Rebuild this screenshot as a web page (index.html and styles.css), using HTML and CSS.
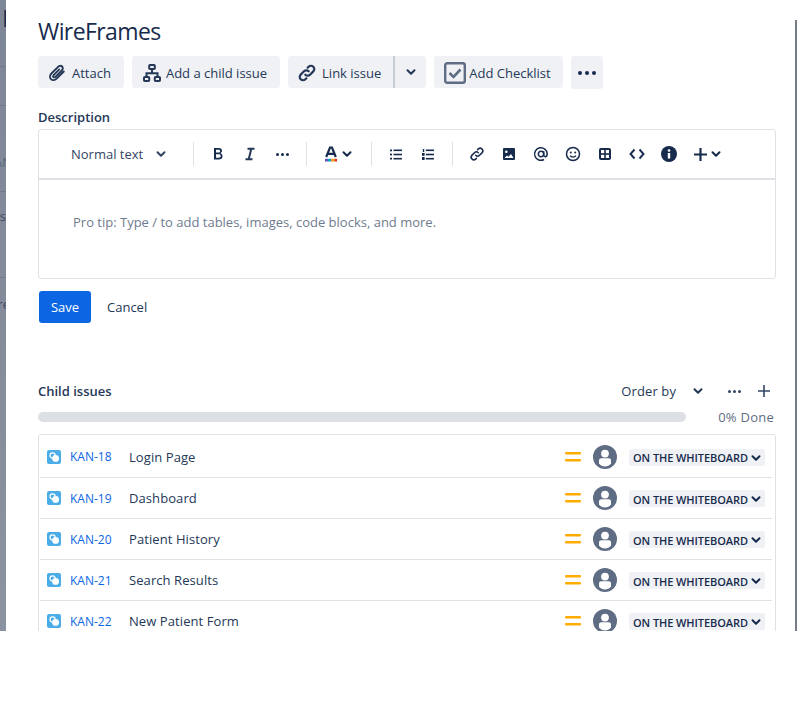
FILE: index.html
```html
<!DOCTYPE html>
<html lang="en">
<head>
    <meta charset="UTF-8">
    <meta name="viewport" content="width=device-width, initial-scale=1.0">
    <title>WireFrames</title>
    <link rel="stylesheet" href="styles.css">
</head>
<body>
    <svg class="defs" width="0" height="0" aria-hidden="true">
        <symbol id="i-chevron" viewBox="0 0 12 12"><path d="M2.500 4.200 6 7.700l3.500-3.500" fill="none" stroke="currentColor" stroke-width="2" stroke-linecap="round" stroke-linejoin="round"/></symbol>
        <symbol id="i-story" viewBox="0 0 14 14"><rect width="14" height="14" rx="2" fill="#4bade8"/><circle cx="5.600" cy="5.400" r="2.600" fill="none" stroke="#fff" stroke-width="1.200"/><circle cx="8.600" cy="8.400" r="3.400" fill="#fff"/></symbol>
        <symbol id="i-medium" viewBox="0 0 16 12"><rect y="1" width="16" height="2.400" rx="1" fill="#ffab00"/><rect y="8" width="16" height="2.400" rx="1" fill="#ffab00"/></symbol>
        <symbol id="i-avatar" viewBox="0 0 24 24"><circle cx="12" cy="12" r="12" fill="#5e6c84"/><circle cx="12" cy="8.600" r="3.900" fill="#fff"/><path d="M6 15.500c0-1.400 1-2.300 2.400-2.300h7.200c1.400 0 2.400.9 2.400 2.300V18.500a7.500 7.500 0 0 1-12 0z" fill="#fff"/></symbol>
    </svg>

    <div class="screen">
        <div class="backdrop">
            <div class="back-row r1"><span class="big">N</span></div>
            <div class="back-row r2"></div>
            <div class="back-row r3"><span class="cut-an">AN</span></div>
            <div class="back-row r4"><span>s</span></div>
            <div class="back-row r5"><span class="cut-re">re</span></div>
        </div>

        <main class="modal">
            <h1 class="title">WireFrames</h1>

            <div class="actions">
                <button class="btn" type="button">
                    <svg class="ic20" viewBox="0 0 20 20"><path d="M16.800 8.500 9.600 15.700c-1.700 1.700-4.200 1.800-5.600.4s-1.300-3.900.4-5.600l6.700-6.700c1.200-1.200 3-1.300 4-.3s.9 2.800-.3 4l-6.400 6.400c-.6.6-1.500.7-2 .2s-.4-1.400.2-2l5.700-5.700" fill="none" stroke="#253858" stroke-width="1.900" stroke-linecap="round"/></svg>
                    Attach
                </button>
                <button class="btn child-btn" type="button">
                    <svg class="ic20" viewBox="0 0 20 20"><g fill="none" stroke="#253858" stroke-width="2"><rect x="7.200" y="2" width="5.600" height="4" rx=".8"/><rect x="2" y="14" width="5.200" height="4" rx=".8"/><rect x="12.800" y="14" width="5.200" height="4" rx=".8"/><path d="M10 6v4.300M4.500 14v-3.700h11V14"/></g></svg>
                    Add a child issue
                </button>
                <div class="split">
                    <button class="btn link-btn" type="button">
                        <svg class="ic20" viewBox="0 0 20 20"><g fill="none" stroke="#253858" stroke-width="2.200" stroke-linecap="round"><path d="M8.300 11.700a3.300 3.300 0 0 0 4.700 0l3.300-3.300a3.300 3.300 0 0 0-4.700-4.700l-1 1"/><path d="M11.700 8.300a3.300 3.300 0 0 0-4.700 0l-3.300 3.300a3.300 3.300 0 0 0 4.700 4.700l1-1"/></g></svg>
                        Link issue
                    </button>
                    <button class="btn split-arrow" type="button"><svg class="ic12" viewBox="0 0 12 12"><use href="#i-chevron"/></svg></button>
                </div>
                <button class="btn check-btn" type="button">
                    <svg class="ic22" viewBox="0 0 22 22"><rect x="1.200" y="1.200" width="19.600" height="19.600" rx="2" fill="none" stroke="#5e6c84" stroke-width="2.400"/><path d="m5.500 11 4 4 7-7.500" fill="none" stroke="#5e6c84" stroke-width="2.600"/></svg>
                    Add Checklist
                </button>
                <button class="btn more-btn" type="button" aria-label="More"><span class="dots big-dots"><i></i><i></i><i></i></span></button>
            </div>

            <h2 class="label desc-label">Description</h2>
            <section class="editor">
                <div class="tools">
                    <span class="style-pick">Normal text <svg class="ic12" viewBox="0 0 12 12"><use href="#i-chevron"/></svg></span>
                    <span class="sep sep1"></span>
                    <span class="tool t-b">
                        <svg viewBox="0 0 16 16"><path d="M4 2h4.800c2 0 3.200 1 3.200 2.800 0 1.200-.7 2.100-1.800 2.500 1.400.3 2.300 1.400 2.300 2.900 0 2.100-1.500 3.300-3.700 3.300H4zm2 1.800v2.800h2.500c1.100 0 1.600-.5 1.600-1.400s-.6-1.400-1.600-1.400zm0 4.500v3.400h2.800c1.200 0 1.900-.6 1.900-1.700s-.7-1.700-1.900-1.700z" fill="#172b4d"/></svg>
                    </span>
                    <span class="tool t-i">
                        <svg viewBox="0 0 16 16"><path d="M5.500 2.800h7M3.500 13.200h7M9.300 2.800 6.700 13.200" fill="none" stroke="#253858" stroke-width="2"/></svg>
                    </span>
                    <span class="tool t-more"><span class="dots"><i></i><i></i><i></i></span></span>
                    <span class="sep sep2"></span>
                    <span class="tool t-color">
                        <svg viewBox="0 0 14 16"><path d="M2.200 11 6 1.500h2L11.800 11M3.800 7.800h6.400" fill="none" stroke="#172b4d" stroke-width="2.200"/><rect x="1" y="12.800" width="3" height="2.700" fill="#6554c0"/><rect x="4" y="12.800" width="3" height="2.700" fill="#00a3bf"/><rect x="7" y="12.800" width="3.500" height="2.700" fill="#ff991f"/><rect x="10.500" y="12.800" width="2.500" height="2.700" fill="#de350b"/></svg>
                        <svg class="ic12" viewBox="0 0 12 12"><use href="#i-chevron"/></svg>
                    </span>
                    <span class="sep sep3"></span>
                    <span class="tool t-ul">
                        <svg viewBox="0 0 12 11"><g fill="#172b4d"><rect x="0" y="0.500" width="2" height="1.800"/><rect x="0" y="4.600" width="2" height="1.800"/><rect x="0" y="8.700" width="2" height="1.800"/><rect x="3.500" y="0.500" width="8.500" height="1.600"/><rect x="3.500" y="4.700" width="8.500" height="1.600"/><rect x="3.500" y="8.900" width="8.500" height="1.600"/></g></svg>
                    </span>
                    <span class="tool t-ol">
                        <svg viewBox="0 0 12 11"><g fill="#172b4d"><rect x="3.800" y="0.500" width="8.200" height="1.600"/><rect x="3.800" y="4.700" width="8.200" height="1.600"/><rect x="3.800" y="8.900" width="8.200" height="1.600"/><rect x="0.800" y="0" width="1.400" height="3"/><rect x="0" y="4" width="2.600" height="2.800"/><rect x="0" y="8" width="2.600" height="3"/></g></svg>
                    </span>
                    <span class="sep sep4"></span>
                    <span class="tool t-link">
                        <svg viewBox="0 0 16 16"><g fill="none" stroke="#172b4d" stroke-width="1.600" stroke-linecap="round"><path d="M6.700 9.300a2.700 2.700 0 0 0 3.800 0l2.700-2.700a2.700 2.700 0 0 0-3.800-3.800l-.8.800"/><path d="M9.300 6.700a2.700 2.700 0 0 0-3.800 0l-2.700 2.700a2.700 2.700 0 0 0 3.800 3.800l.8-.8"/></g></svg>
                    </span>
                    <span class="tool t-img">
                        <svg viewBox="0 0 12 12"><rect width="12" height="12" rx="1" fill="#172b4d"/><circle cx="3.300" cy="3.700" r="1.300" fill="#fff"/><path d="m1.500 10 2.500-2.500 1.500 1.300L8 6l2.500 4z" fill="#fff"/></svg>
                    </span>
                    <span class="tool t-at">
                        <svg viewBox="0 0 16 16"><g fill="none" stroke="#172b4d" stroke-width="1.500"><circle cx="8" cy="8" r="2.700"/><path d="M10.700 5.200v3.900c0 1 .7 1.600 1.500 1.600s2-.9 2-2.900A6.300 6.300 0 1 0 11 13.500"/></g></svg>
                    </span>
                    <span class="tool t-emoji">
                        <svg viewBox="0 0 16 16"><circle cx="8" cy="8" r="6.500" fill="none" stroke="#172b4d" stroke-width="1.500"/><circle cx="5.800" cy="6.500" r="1" fill="#172b4d"/><circle cx="10.200" cy="6.500" r="1" fill="#172b4d"/><path d="M5 9.800c1.500 1.700 4.500 1.700 6 0" fill="none" stroke="#172b4d" stroke-width="1.300"/></svg>
                    </span>
                    <span class="tool t-table">
                        <svg viewBox="0 0 12 12"><rect width="12" height="12" rx="2" fill="#172b4d"/><g fill="#fff"><rect x="2" y="2" width="3.200" height="3.200"/><rect x="6.800" y="2" width="3.200" height="3.200"/><rect x="2" y="6.800" width="3.200" height="3.200"/><rect x="6.800" y="6.800" width="3.200" height="3.200"/></g></svg>
                    </span>
                    <span class="tool t-code">
                        <svg viewBox="0 0 16 12"><path d="M5.500 1.500 1.500 6l4 4.500M10.500 1.500l4 4.500-4 4.500" fill="none" stroke="#172b4d" stroke-width="1.900"/></svg>
                    </span>
                    <span class="tool t-info">
                        <svg viewBox="0 0 16 16"><circle cx="8" cy="8" r="8" fill="#172b4d"/><circle cx="8" cy="4.500" r="1.300" fill="#fff"/><rect x="6.800" y="7" width="2.400" height="5.500" fill="#fff"/></svg>
                    </span>
                    <span class="tool t-plus">
                        <svg viewBox="0 0 12 12"><path d="M6 0v12M0 6h12" stroke="#172b4d" stroke-width="2"/></svg>
                        <svg class="ic12" viewBox="0 0 12 12"><use href="#i-chevron"/></svg>
                    </span>
                </div>
                <div class="editor-body">Pro tip: Type / to add tables, images, code blocks, and more.</div>
            </section>

            <div class="form-btns">
                <button class="save" type="button">Save</button>
                <button class="cancel" type="button">Cancel</button>
            </div>

            <div class="child-head">
                <h2 class="label">Child issues</h2>
                <div class="child-tools">
                    <span class="order">Order by</span>
                    <svg class="ic12 order-arrow" viewBox="0 0 12 12"><use href="#i-chevron"/></svg>
                    <span class="dots child-dots"><i></i><i></i><i></i></span>
                    <svg class="child-plus" viewBox="0 0 12 12"><path d="M6 0v12M0 6h12" stroke="#344563" stroke-width="1.600"/></svg>
                </div>
            </div>

            <div class="progress-row">
                <div class="progress"></div>
                <span class="done">0% Done</span>
            </div>

            <div class="issues">
                <div class="issue">
                    <svg class="story"><use href="#i-story"/></svg>
                    <a class="key">KAN-18</a>
                    <span class="name">Login Page</span>
                    <svg class="prio"><use href="#i-medium"/></svg>
                    <svg class="avatar"><use href="#i-avatar"/></svg>
                    <span class="status">ON THE WHITEBOARD <svg class="ic12" viewBox="0 0 12 12"><use href="#i-chevron"/></svg></span>
                </div>
                <div class="issue">
                    <svg class="story"><use href="#i-story"/></svg>
                    <a class="key">KAN-19</a>
                    <span class="name">Dashboard</span>
                    <svg class="prio"><use href="#i-medium"/></svg>
                    <svg class="avatar"><use href="#i-avatar"/></svg>
                    <span class="status">ON THE WHITEBOARD <svg class="ic12" viewBox="0 0 12 12"><use href="#i-chevron"/></svg></span>
                </div>
                <div class="issue">
                    <svg class="story"><use href="#i-story"/></svg>
                    <a class="key">KAN-20</a>
                    <span class="name">Patient History</span>
                    <svg class="prio"><use href="#i-medium"/></svg>
                    <svg class="avatar"><use href="#i-avatar"/></svg>
                    <span class="status">ON THE WHITEBOARD <svg class="ic12" viewBox="0 0 12 12"><use href="#i-chevron"/></svg></span>
                </div>
                <div class="issue">
                    <svg class="story"><use href="#i-story"/></svg>
                    <a class="key">KAN-21</a>
                    <span class="name">Search Results</span>
                    <svg class="prio"><use href="#i-medium"/></svg>
                    <svg class="avatar"><use href="#i-avatar"/></svg>
                    <span class="status">ON THE WHITEBOARD <svg class="ic12" viewBox="0 0 12 12"><use href="#i-chevron"/></svg></span>
                </div>
                <div class="issue">
                    <svg class="story"><use href="#i-story"/></svg>
                    <a class="key">KAN-22</a>
                    <span class="name">New Patient Form</span>
                    <svg class="prio"><use href="#i-medium"/></svg>
                    <svg class="avatar"><use href="#i-avatar"/></svg>
                    <span class="status">ON THE WHITEBOARD <svg class="ic12" viewBox="0 0 12 12"><use href="#i-chevron"/></svg></span>
                </div>
            </div>
        </main>

        <div class="edge"><div class="edge-bar"></div></div>
    </div>
</body>
</html>
```

FILE: styles.css
```css
* {
    box-sizing: border-box;
}
html, body {
    margin: 0;
    height: 701px;
    overflow: hidden;
    background: #ffffff;
}
body {
    font-family: "Open Sans", "Noto Sans", Arial, sans-serif;
    font-size: 13px;
    color: #172b4d;
}
.defs {
    display: block;
    height: 0;
}
button {
    font: inherit;
    color: inherit;
    border: none;
    cursor: pointer;
}
svg {
    display: block;
    flex: none;
}
.ic12 {
    width: 12px;
    height: 12px;
}
.ic20 {
    width: 20px;
    height: 20px;
}
.ic22 {
    width: 22px;
    height: 22px;
}

/* main frame, cut off at 631 like the capture */
.screen {
    display: flex;
    height: 631px;
    overflow: hidden;
}
.backdrop {
    width: 6px;
    background: linear-gradient(#7d8697, #8b92a1);
    color: #3f4a60;
    font-size: 13px;
    overflow: hidden;
}
.back-row {
    display: flex;
    justify-content: flex-end;
    white-space: nowrap;
    border-bottom: 1px solid #727a8a;
}
.r1 { height: 67px; align-items: flex-start; }
.r2 { height: 39px; }
.r3 { height: 86px; align-items: center; padding-top: 27px; }
.r4 { height: 86px; align-items: flex-start; padding-top: 15px; }
.r5 { height: 60px; align-items: flex-start; padding-top: 17px; border-bottom: none; }
.big {
    font-size: 24px;
    line-height: 36px;
    color: #172b4d;
    margin-right: -14px;
}
.cut-an {
    margin-right: -6px;
    color: #5a6478;
}
.cut-re {
    margin-right: -4px;
}
.modal {
    flex: 1;
    min-width: 0;
    padding: 0 0 0 32px;
    background: #ffffff;
}
.edge {
    width: 6px;
    padding-top: 20px;
}
.edge-bar {
    width: 2px;
    height: 100%;
    background: #777c85;
}
.title {
    margin: 0;
    padding-top: 15px;
    font-size: 23px;
    font-weight: 400;
    line-height: 33px;
    letter-spacing: -0.6px;
    color: #172b4d;
}

/* action buttons */
.actions {
    display: flex;
    align-items: flex-start;
    gap: 8px;
    margin-top: 8px;
    height: 33px;
}
.btn {
    display: flex;
    align-items: center;
    gap: 5px;
    height: 32px;
    padding: 1px 13px 0 9px;
    background: #f0f1f4;
    border-radius: 3px;
    color: #253858;
    white-space: nowrap;
}
.child-btn {
    gap: 4px;
    padding-left: 10px;
    padding-right: 13px;
}
.split {
    display: flex;
}
.split .link-btn {
    padding-right: 12px;
    border-radius: 3px 0 0 3px;
}
.split .split-arrow {
    width: 33px;
    padding: 0;
    justify-content: center;
    border-left: 2px solid #c8ced8;
    border-radius: 0 3px 3px 0;
}
.check-btn {
    gap: 3px;
    width: 129px;
    padding-left: 10px;
    padding-right: 0;
}
.more-btn {
    width: 32px;
    height: 33px;
    justify-content: center;
    padding: 0;
}
.dots {
    display: inline-flex;
    gap: 2px;
}
.dots i {
    display: block;
    width: 3px;
    height: 3px;
    border-radius: 50%;
    background: #172b4d;
}
.big-dots {
    gap: 3px;
}
.big-dots i {
    width: 4px;
    height: 4px;
}
.label {
    margin: 0;
    font-size: 13px;
    font-weight: 600;
    line-height: 18px;
    color: #253858;
}
.desc-label {
    margin-top: 19px;
}

/* editor */
.editor {
    margin-top: 3px;
    margin-right: 19px;
    height: 150px;
    border: 1px solid #dfe1e6;
    border-radius: 3px;
}
.tools {
    display: flex;
    align-items: center;
    height: 50px;
    border-bottom: 2px solid #dfe1e6;
    color: #172b4d;
}
.style-pick {
    display: flex;
    align-items: center;
    gap: 12px;
    width: 154px;
    padding-left: 32px;
    color: #344563;
    flex: none;
}
.sep {
    width: 1px;
    height: 24px;
    background: #dfe1e6;
    flex: none;
}
.tool {
    display: flex;
    align-items: center;
    justify-content: center;
    flex: none;
    height: 20px;
}
.t-b, .t-i { width: 32px; }
.t-b svg, .t-i svg { width: 16px; height: 16px; }
.t-b { margin-left: 8px; }
.t-more { width: 32px; }
.t-color { margin-left: 17px; gap: 3px; }
.t-color svg:first-child { width: 14px; height: 16px; }
.sep2 { margin-left: 8px; }
.sep3 { margin-left: 18px; }
.t-ul, .t-ol { width: 32px; }
.t-ul { margin-left: 8px; }
.t-ul svg, .t-ol svg { width: 12px; height: 11px; }
.sep4 { margin-left: 8px; }
.t-link, .t-img, .t-at, .t-emoji, .t-table, .t-code, .t-info { width: 32px; }
.t-link { margin-left: 8px; }
.t-link svg, .t-at svg, .t-emoji svg, .t-info svg { width: 16px; height: 16px; }
.t-img svg, .t-table svg { width: 12px; height: 12px; }
.t-code svg { width: 16px; height: 12px; }
.t-plus { margin-left: 9px; gap: 3px; }
.t-plus svg:first-child { width: 13px; height: 13px; }
.editor-body {
    padding: 32px 0 0 34px;
    line-height: 20px;
    color: #6f7b8f;
}

.form-btns {
    display: flex;
    align-items: center;
    margin-top: 12px;
    padding-left: 1px;
}
.save {
    width: 52px;
    height: 32px;
    background: #0c66e4;
    color: #ffffff;
    border-radius: 3px;
}
.cancel {
    background: none;
    padding: 0;
    margin-left: 16px;
    color: #253858;
}

.child-head {
    display: flex;
    align-items: center;
    justify-content: space-between;
    margin-top: 58px;
    margin-right: 25px;
    height: 20px;
}
.child-tools {
    display: flex;
    align-items: center;
    color: #253858;
}
.order {
    letter-spacing: 0.1px;
}
.order-arrow {
    margin-left: 16px;
}
.child-dots {
    margin-left: 24px;
}
.child-dots i {
    background: #344563;
}
.child-plus {
    width: 12px;
    height: 12px;
    margin-left: 17px;
}
.progress-row {
    display: flex;
    align-items: center;
    margin-top: 6px;
    margin-right: 21px;
    height: 20px;
}
.progress {
    width: 648px;
    height: 10px;
    border-radius: 5px;
    background: #dcdfe4;
}
.done {
    margin-left: auto;
    letter-spacing: 0.25px;
    color: #5e6c84;
}
.issues {
    margin-top: 7px;
    margin-right: 19px;
    border: 1px solid #dfe1e6;
    border-radius: 3px;
    padding: 0 3px 0 1px;
}
.issue {
    display: flex;
    align-items: center;
    height: 41px;
    border-bottom: 1px solid #dfe1e6;
    padding: 0 7px;
}
.issue:first-child {
    height: 43px;
    padding-top: 1px;
}
.story {
    width: 14px;
    height: 14px;
}
.key {
    width: 59px;
    margin-left: 9px;
    font-size: 12px;
    color: #0c66e4;
}
.name {
    color: #253858;
    letter-spacing: 0.08px;
}
.prio {
    width: 16px;
    height: 12px;
    margin-left: auto;
}
.avatar {
    width: 24px;
    height: 24px;
    margin-left: 12px;
}
.status {
    display: flex;
    align-items: center;
    gap: 2px;
    width: 136px;
    height: 17px;
    margin-left: 12px;
    margin-top: 1px;
    padding: 1px 3px 0 4px;
    border-radius: 3px;
    background: #f0f1f4;
    font-size: 11px;
    font-weight: 600;
    letter-spacing: -0.08px;
    color: #172b4d;
    white-space: nowrap;
}
```
